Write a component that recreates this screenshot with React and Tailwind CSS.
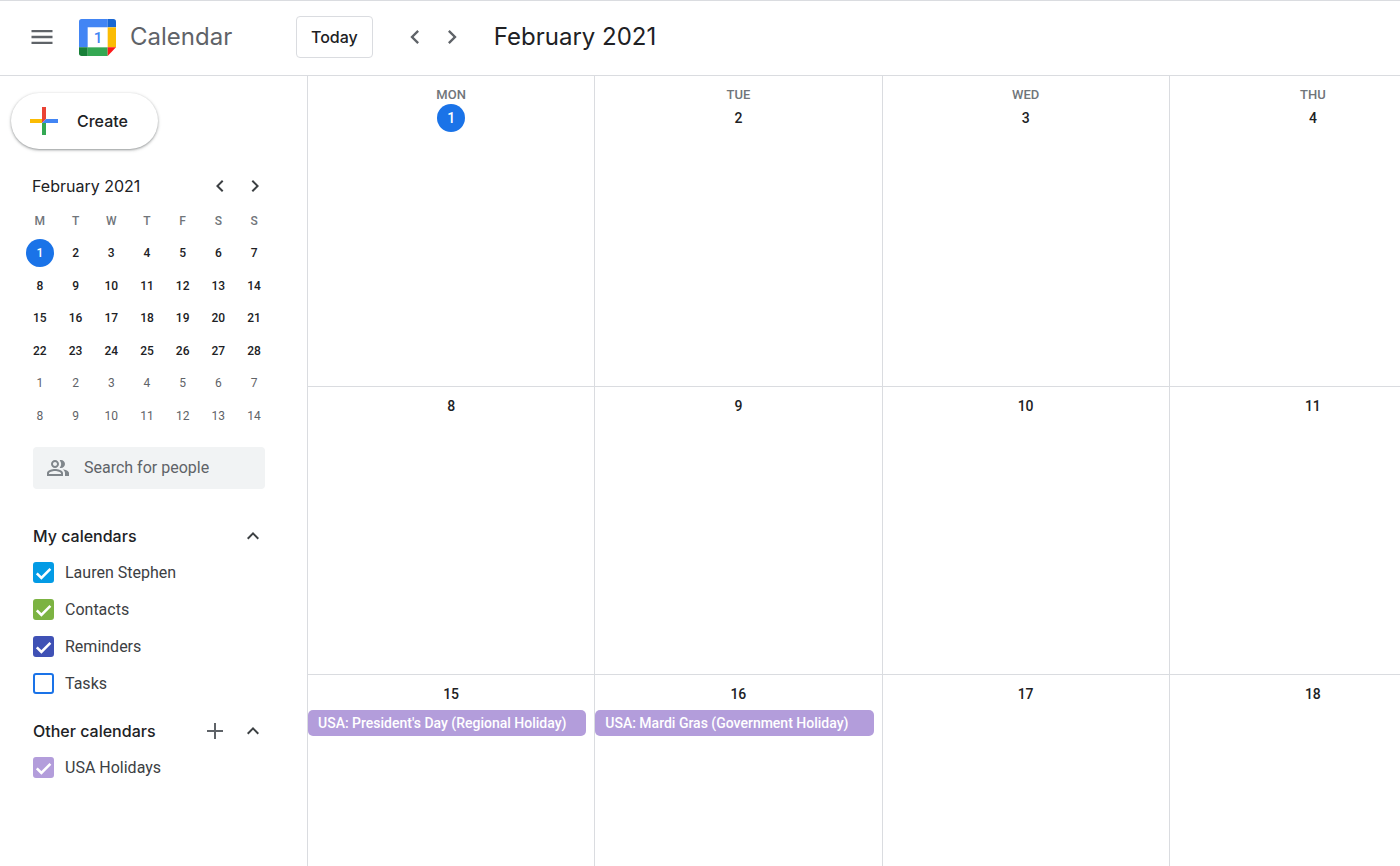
import React, { useState } from 'react'
import { MdMenu, MdChevronLeft, MdChevronRight, MdExpandLess, MdOutlinePeopleAlt } from 'react-icons/md'

const miniWeeks = [
  [1, 2, 3, 4, 5, 6, 7],
  [8, 9, 10, 11, 12, 13, 14],
  [15, 16, 17, 18, 19, 20, 21],
  [22, 23, 24, 25, 26, 27, 28],
  [1, 2, 3, 4, 5, 6, 7],
  [8, 9, 10, 11, 12, 13, 14],
]

const monthWeeks = [
  [1, 2, 3, 4],
  [8, 9, 10, 11],
  [15, 16, 17, 18],
]

const events = {
  15: "USA: President's Day (Regional Holiday)",
  16: 'USA: Mardi Gras (Government Holiday)',
}

const myCalendars = [
  { name: 'Lauren Stephen', color: 'border-[#039be5] checked:bg-[#039be5]', checked: true },
  { name: 'Contacts', color: 'border-[#7cb342] checked:bg-[#7cb342]', checked: true },
  { name: 'Reminders', color: 'border-[#3f51b5] checked:bg-[#3f51b5]', checked: true },
  { name: 'Tasks', color: 'border-[#1a73e8] checked:bg-[#1a73e8]', checked: false },
]

const otherCalendars = [
  { name: 'USA Holidays', color: 'border-[#b39ddb] checked:bg-[#b39ddb]', checked: true },
]

function Logo() {
  return (
    <svg viewBox="0 0 111 111" className="w-[37px] h-[37px]" aria-hidden="true">
      <path fill="#fff" d="M26 25h60v60H26z" />
      <path fill="#4285f4" d="M8 0h78v25H26v60H0V8a8 8 0 0 1 8-8z" />
      <path fill="#1967d2" d="M86 0h17a8 8 0 0 1 8 8v17H86z" />
      <path fill="#fbbc04" d="M86 25h25v60H86z" />
      <path fill="#34a853" d="M26 85h60v26H26z" />
      <path fill="#188038" d="M0 85h26v26H8a8 8 0 0 1-8-8z" />
      <path fill="#fc1a1a" d="M86 85h25l-25 26z" />
      <text x="57" y="72" textAnchor="middle" fontFamily="Roboto, sans-serif" fontWeight="500" fontSize="46" fill="#4285f4">1</text>
    </svg>
  )
}

function CreateIcon() {
  return (
    <svg viewBox="0 0 28 28" className="w-7 h-7" aria-hidden="true">
      <path fill="#ea4335" d="M12 0h4v12l-4 4z" />
      <path fill="#fbbc04" d="M0 12h12v4H0z" />
      <path fill="#34a853" d="M12 16h4v12h-4z" />
      <path fill="#4285f4" d="M16 12h12v4H12z" />
    </svg>
  )
}

function CalendarCheck({ name, color, checked }) {
  const [on, setOn] = useState(checked)
  return (
    <label className="flex items-center h-[37px] gap-[11px] cursor-pointer">
      <span className="relative flex">
        <input
          type="checkbox"
          checked={on}
          onChange={() => setOn(!on)}
          className={`peer appearance-none w-[21px] h-[21px] border-2 rounded-[3px] ${color}`}
        />
        <svg viewBox="0 0 21 21" className="absolute inset-0 hidden peer-checked:block pointer-events-none" aria-hidden="true">
          <path d="M3.8 11.3l4.6 4.6 9-9" fill="none" stroke="#fff" strokeWidth="2.6" />
        </svg>
      </span>
      {name}
    </label>
  )
}

function MiniCalendar() {
  return (
    <section className="mt-[19px]">
      <div className="flex items-center h-9 pl-8 pr-10">
        <h2 className="flex-1 font-[Inter,sans-serif] text-base text-[#202124]">February 2021</h2>
        <button aria-label="Previous month" className="text-[#3c4043] mr-[11px]"><MdChevronLeft className="w-6 h-6" /></button>
        <button aria-label="Next month" className="text-[#3c4043]"><MdChevronRight className="w-6 h-6" /></button>
      </div>
      <table className="ml-[22px] w-[250px] table-fixed text-xs text-center">
        <thead>
          <tr className="h-[33px]">
            {['M', 'T', 'W', 'T', 'F', 'S', 'S'].map((d, i) => (
              <th key={i} className="p-0 font-medium text-[#70757a]">{d}</th>
            ))}
          </tr>
        </thead>
        <tbody>
          {miniWeeks.map((week, w) => (
            <tr key={w} className={`${w > 3 ? 'text-[#5f6368]' : 'text-[#202124] font-medium'} ${w % 2 ? 'h-[33px]' : 'h-8'}`}>
              {week.map(day => (
                <td key={day} className="p-0">
                  {w === 0 && day === 1 ? (
                    <span className="mx-auto flex items-center justify-center w-7 h-7 rounded-full bg-[#1a73e8] text-white">1</span>
                  ) : day}
                </td>
              ))}
            </tr>
          ))}
        </tbody>
      </table>
    </section>
  )
}

function Sidebar() {
  return (
    <aside className="w-[307px] shrink-0 pt-[17px] text-base text-[#3c4043]">
      <button className="ml-[11px] flex items-center gap-[19px] h-14 pl-[19px] pr-[30px] rounded-full bg-white shadow-[0_1px_2px_rgba(60,64,67,0.4),0_1px_3px_1px_rgba(60,64,67,0.15)] font-[Inter,sans-serif] font-medium text-[#202124]">
        <CreateIcon />
        Create
      </button>
      <MiniCalendar />
      <div className="mt-[15px] ml-[33px] mr-[42px] flex items-center h-[42px] pl-[13px] rounded bg-[#f1f3f4]">
        <MdOutlinePeopleAlt className="w-6 h-6 shrink-0 text-[#80868b]" />
        <input
          aria-label="Search for people"
          placeholder="Search for people"
          className="ml-[14px] w-full min-w-0 bg-transparent outline-none placeholder:text-[#5f6368]"
        />
      </div>
      <section className="mt-7 pl-[33px] pr-[42px]">
        <div className="flex items-center h-[37px]">
          <h2 className="flex-1 font-[Inter,sans-serif] font-medium text-[#202124]">My calendars</h2>
          <button aria-label="Collapse my calendars"><MdExpandLess className="w-6 h-6" /></button>
        </div>
        {myCalendars.map(c => <CalendarCheck key={c.name} {...c} />)}
      </section>
      <section className="mt-[10px] pl-[33px] pr-[42px]">
        <div className="flex items-center h-[37px]">
          <h2 className="flex-1 font-[Inter,sans-serif] font-medium text-[#202124]">Other calendars</h2>
          <button aria-label="Add other calendars" className="mr-[18px]">
            <svg viewBox="0 0 16 16" className="w-4 h-4" aria-hidden="true">
              <path d="M8 0v16M0 8h16" stroke="#5f6368" strokeWidth="2" />
            </svg>
          </button>
          <button aria-label="Collapse other calendars"><MdExpandLess className="w-6 h-6" /></button>
        </div>
        {otherCalendars.map(c => <CalendarCheck key={c.name} {...c} />)}
      </section>
    </aside>
  )
}

function MonthGrid() {
  return (
    <main className="flex-1 min-w-0 overflow-hidden">
      <table className="w-[calc(100%+56px)] table-fixed border-separate border-spacing-0 text-center">
        <thead>
          <tr>
            {['MON', 'TUE', 'WED', 'THU'].map(d => (
              <th key={d} className="h-7 p-0 pt-[10px] leading-[18px] border-l border-[#dadce0] text-[13px] font-medium text-[#70757a]">{d}</th>
            ))}
          </tr>
        </thead>
        <tbody>
          {monthWeeks.map((week, w) => (
            <tr key={w} className={w === 0 ? 'h-[283px]' : 'h-[288px]'}>
              {week.map(day => (
                <td key={day} className={`p-0 align-top border-l border-b border-[#dadce0] ${w === 0 ? '' : 'pt-[5px]'}`}>
                  <span className={`mx-auto flex items-center justify-center w-7 h-7 rounded-full text-sm font-medium ${day === 1 ? 'bg-[#1a73e8] text-white' : 'text-[#202124]'}`}>
                    {day}
                  </span>
                  {events[day] && (
                    <button className="mt-[2px] flex items-center w-[calc(100%-8px)] h-[26px] px-[10px] rounded-[5px] bg-[#b39ddb] text-sm font-medium text-white whitespace-nowrap">
                      {events[day]}
                    </button>
                  )}
                </td>
              ))}
            </tr>
          ))}
        </tbody>
      </table>
    </main>
  )
}

export default function App() {
  return (
    <div className="h-screen flex flex-col overflow-hidden bg-white border-t border-[#dadce0] font-[Roboto,sans-serif]">
      <header className="flex items-center shrink-0 h-[75px] pb-[2px] border-b border-[#dadce0]">
        <button aria-label="Main menu" className="ml-7 text-[#5f6368]"><MdMenu className="w-7 h-7" /></button>
        <div className="ml-[23px] flex items-center gap-[14px] w-[217px]">
          <Logo />
          <span className="font-[Inter,sans-serif] text-2xl text-[#5f6368]">Calendar</span>
        </div>
        <button className="h-[42px] px-[14px] border border-[#dadce0] rounded font-[Inter,sans-serif] text-base font-medium text-[#202124]">Today</button>
        <button aria-label="Previous month" className="ml-7 text-[#5f6368]"><MdChevronLeft className="w-7 h-7" /></button>
        <button aria-label="Next month" className="ml-[9px] text-[#5f6368]"><MdChevronRight className="w-7 h-7" /></button>
        <h1 className="ml-7 font-[Inter,sans-serif] text-2xl text-[#202124]">February 2021</h1>
      </header>
      <div className="flex flex-1 min-h-0">
        <Sidebar />
        <MonthGrid />
      </div>
    </div>
  )
}
